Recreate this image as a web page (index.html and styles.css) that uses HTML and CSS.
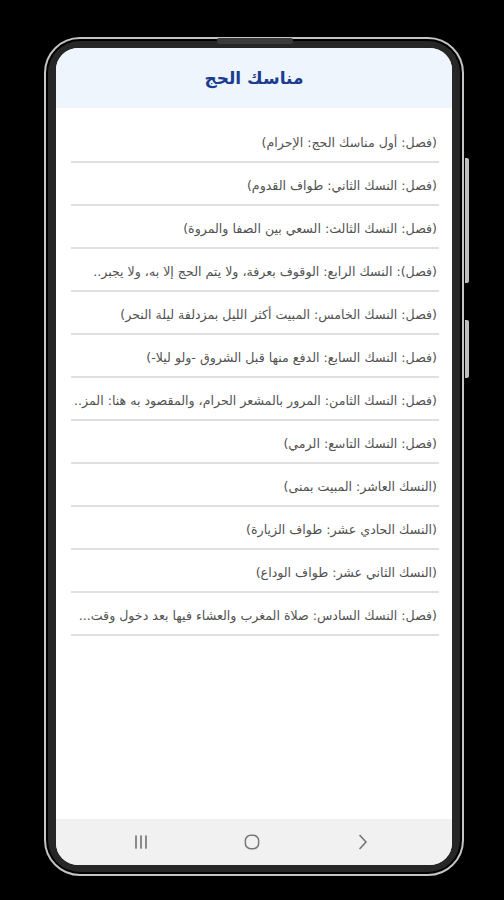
FILE: index.html
```html
<!DOCTYPE html>
<html lang="ar">

<head>
    <meta charset="UTF-8">
    <meta name="viewport" content="width=device-width, initial-scale=1.0">
    <title>مناسك الحج</title>

    <link rel="stylesheet" href="styles.css">
</head>

<body>
    <div class="phone">
        <span class="speaker"></span>
        <span class="side-key key-volume"></span>
        <span class="side-key key-power"></span>

        <div class="bezel">
            <div class="screen" dir="rtl">
                <header class="app-bar">
                    <h1>مناسك الحج</h1>
                </header>

                <ul class="chapters">
                    <li>(فصل: أول مناسك الحج: الإحرام)</li>
                    <li>(فصل: النسك الثاني: طواف القدوم)</li>
                    <li>(فصل: النسك الثالث: السعي بين الصفا والمروة)</li>
                    <li>(فصل): النسك الرابع: الوقوف بعرفة، ولا يتم الحج إلا به، ولا يجبر..</li>
                    <li>(فصل: النسك الخامس: المبيت أكثر الليل بمزدلفة ليلة النحر)</li>
                    <li>(فصل: النسك السابع: الدفع منها قبل الشروق -ولو ليلا-)</li>
                    <li>(فصل: النسك الثامن: المرور بالمشعر الحرام، والمقصود به هنا: المز..</li>
                    <li>(فصل: النسك التاسع: الرمي)</li>
                    <li>(النسك العاشر: المبيت بمنى)</li>
                    <li>(النسك الحادي عشر: طواف الزيارة)</li>
                    <li>(النسك الثاني عشر: طواف الوداع)</li>
                    <li>(فصل: النسك السادس: صلاة المغرب والعشاء فيها بعد دخول وقت...</li>
                </ul>

                <nav class="nav-bar" dir="ltr">
                    <span class="nav-btn">
                        <svg viewBox="0 0 16 16">
                            <path d="M3 2v12M8 2v12M13 2v12" />
                        </svg>
                    </span>
                    <span class="nav-btn">
                        <svg viewBox="0 0 18 18">
                            <rect x="1.5" y="1.5" width="15" height="15" rx="6" />
                        </svg>
                    </span>
                    <span class="nav-btn">
                        <svg viewBox="0 0 12 16">
                            <path d="M3 1.5l6 6.5-6 6.5" />
                        </svg>
                    </span>
                </nav>
            </div>
        </div>
    </div>
</body>

</html>
```

FILE: styles.css
```css
* {
    --frame-line: rgb(196, 196, 196);
    --bezel: rgb(38, 38, 38);
    --title: rgb(28, 60, 145);
    --row-text: rgb(82, 82, 82);
    --rule: rgb(224, 224, 224);
    --nav-icon: rgb(120, 120, 120);
}

body {
    background-color: #000;
    height: 100vh;
    margin: 0;
    overflow: hidden;
}

.phone {
    position: relative;
    box-sizing: border-box;
    width: 420px;
    height: 839px;
    margin: 37px 0 0 44px;
    padding: 2px;

    background: #000;
    border: 2px solid var(--frame-line);
    border-radius: 36px;
}

.speaker {
    position: absolute;
    top: -1px;
    left: 171px;
    width: 76px;
    height: 6px;
    background: rgb(58, 58, 58);
    border-radius: 2px;
}

.side-key {
    position: absolute;
    right: -7px;
    width: 4px;
    background: rgb(190, 190, 190);
    border-radius: 0 2px 2px 0;
}

.key-volume {
    top: 119px;
    height: 125px;
}

.key-power {
    top: 281px;
    height: 58px;
}

.bezel {
    box-sizing: border-box;
    height: 100%;
    padding: 7px 8px;
    background: var(--bezel);
    border-radius: 32px;
}

.screen {
    display: flex;
    flex-direction: column;
    height: 100%;
    overflow: hidden;

    background: #fff;
    border-radius: 22px;
    font-family: "DejaVu Sans", sans-serif;
}

.app-bar {
    display: flex;
    align-items: center;
    justify-content: center;
    height: 60px;
    flex-shrink: 0;
    background: rgb(238, 245, 253);
}

.app-bar h1 {
    margin: 0;
    color: var(--title);
    font-size: 17px;
    font-weight: 700;
}

.chapters {
    flex: 1;
    margin: 0;
    padding: 12px 13px 0 15px;
    list-style: none;
}

.chapters li {
    display: flex;
    align-items: center;
    box-sizing: border-box;
    height: 43px;
    padding: 3px 2px 0 0;

    color: var(--row-text);
    font-size: 12.6px;
    white-space: nowrap;
    overflow: hidden;
    text-overflow: ellipsis;

    border-bottom: 2px solid var(--rule);
}

.nav-bar {
    display: flex;
    align-items: center;
    justify-content: center;
    gap: 93px;
    height: 46px;
    flex-shrink: 0;
    padding-right: 4px;
    background: rgb(241, 241, 241);
}

.nav-btn {
    display: flex;
    justify-content: center;
    width: 18px;
}

.nav-btn svg {
    height: 16px;
    width: auto;
    fill: none;
    stroke: var(--nav-icon);
    stroke-width: 1.7;
    stroke-linecap: round;
    stroke-linejoin: round;
}
```
